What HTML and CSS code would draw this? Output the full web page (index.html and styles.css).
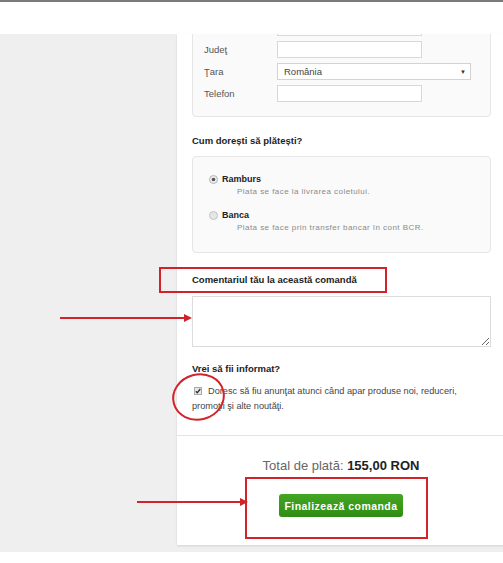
FILE: index.html
```html
<!DOCTYPE html>
<html lang="ro">
<head>
    <meta charset="UTF-8">
    <meta name="viewport" content="width=device-width, initial-scale=1.0">
    <title>Finalizare comandă</title>
    <link rel="stylesheet" href="styles.css">
</head>
<body>

    <div class="topbar"></div>

    <div class="stage">
        <div class="card">
            <div class="card-body">

                <div class="address">
                    <label></label>
                    <input type="text" class="field">
                    <label>Judeţ</label>
                    <input type="text" class="field">
                    <label>Ţara</label>
                    <div class="select">
                        <span>România</span>
                        <span class="caret">&#9660;</span>
                    </div>
                    <label>Telefon</label>
                    <input type="text" class="field">
                </div>

                <h4 class="section-title first">Cum dorești să plătești?</h4>
                <div class="payment">
                    <div class="option">
                        <div class="option-head">
                            <svg class="radio" width="9" height="9" viewBox="0 0 9 9">
                                <circle cx="4.5" cy="4.5" r="4" fill="#eeeeee" stroke="#b5b5b5" stroke-width="1"/>
                                <circle cx="4.5" cy="4.5" r="1.8" fill="#555"/>
                            </svg>
                            <span class="option-name">Ramburs</span>
                        </div>
                        <div class="option-desc">Plata se face la livrarea coletului.</div>
                    </div>
                    <div class="option">
                        <div class="option-head">
                            <svg class="radio" width="9" height="9" viewBox="0 0 9 9">
                                <circle cx="4.5" cy="4.5" r="4" fill="#e6e6e6" stroke="#c2c2c2" stroke-width="1"/>
                            </svg>
                            <span class="option-name">Banca</span>
                        </div>
                        <div class="option-desc">Plata se face prin transfer bancar în cont BCR.</div>
                    </div>
                </div>

                <h4 class="section-title comment-title">Comentariul tău la această comandă</h4>
                <textarea class="comment"></textarea>

                <h4 class="section-title notify-title">Vrei să fii informat?</h4>
                <p class="notify">
                    <svg class="check" width="8" height="8" viewBox="0 0 8 8">
                        <rect x="0.5" y="0.5" width="7" height="7" fill="#e8e8e8" stroke="#a9a9a9"/>
                        <path d="M1.8 4.2 L3.3 5.7 L6.3 2" fill="none" stroke="#333" stroke-width="1.3"/>
                    </svg>Doresc să fiu anunţat atunci când apar produse noi, reduceri, promoţii şi alte noutăţi.
                </p>
            </div>

            <div class="card-footer">
                <div class="total">Total de plată: <strong>155,00 RON</strong></div>
                <button class="submit">Finalizează comanda</button>
            </div>
        </div>
    </div>

    <!-- annotations drawn over the screenshot -->
    <svg class="marks" width="503" height="563" viewBox="0 0 503 563">
        <rect x="160" y="268" width="226" height="24" fill="none" stroke="#d2232a" stroke-width="2"/>
        <rect x="246" y="478" width="181" height="60" fill="none" stroke="#d2232a" stroke-width="2"/>
        <ellipse cx="198.5" cy="397" rx="25.5" ry="22.5" fill="none" stroke="#d2232a" stroke-width="2" transform="rotate(-15 198.5 397)"/>
        <line x1="60" y1="318" x2="185" y2="318" stroke="#d2232a" stroke-width="2"/>
        <polygon points="184,314 192,318 184,322" fill="#d2232a"/>
        <line x1="137" y1="502" x2="241" y2="502" stroke="#d2232a" stroke-width="2"/>
        <polygon points="240,498 248,502 240,506" fill="#d2232a"/>
    </svg>

</body>
</html>
```

FILE: styles.css
```css
body {
    margin: 0;
    height: 563px;
    overflow: hidden;
    position: relative;
    background: #fff;
    font-family: "Liberation Sans", Arial, sans-serif;
    color: #444;
}
.topbar {
    height: 32px;
    border-top: 2px solid #7a7a7a;
    background: #fff;
}
.stage {
    height: 518px;
    padding-left: 177px;
    box-sizing: border-box;
    background: #efefef;
}
.card {
    width: 328px;
    height: 511px;
    background: #fff;
    overflow: hidden;
    box-shadow: 0 1px 2px rgba(0, 0, 0, 0.12);
}
.card-body {
    padding: 0 14px 21px 15px;
}

/* address block, scrolled half out of view */
.address {
    margin-top: -23px;
    border: 1px solid #e6e6e6;
    border-radius: 4px;
    background: #fafafa;
    padding: 7px 11px 14px;
    display: grid;
    grid-template-columns: 73px auto;
    row-gap: 5px;
    align-items: center;
}
.address label {
    font-size: 9.5px;
    color: #555;
}
.field {
    width: 145px;
    height: 17px;
    box-sizing: border-box;
    border: 1px solid #d8d8d8;
    background: #fff;
    margin: 0;
    padding: 0;
}
.select {
    width: 194px;
    height: 17px;
    box-sizing: border-box;
    border: 1px solid #d3d3d3;
    background: #fff;
    display: flex;
    justify-content: space-between;
    align-items: center;
    padding: 0 4px 0 6px;
    font-size: 9.5px;
    color: #444;
}
.caret {
    font-size: 6px;
    color: #333;
}

.section-title {
    font-size: 9.5px;
    font-weight: bold;
    color: #222;
    line-height: 12px;
    margin: 0;
}
.section-title.first {
    margin-top: 18px;
}
.comment-title {
    margin-top: 21px;
}
.notify-title {
    margin-top: 16px;
}

.payment {
    margin-top: 9px;
    border: 1px solid #e6e6e6;
    border-radius: 4px;
    background: #fafafa;
    padding: 16px 16px 18px;
    display: flex;
    flex-direction: column;
    gap: 11px;
}
.option-head {
    display: flex;
    align-items: center;
    height: 12px;
}
.radio {
    margin-right: 4px;
}
.option-name {
    font-size: 9px;
    font-weight: bold;
    color: #222;
}
.option-desc {
    padding-left: 28px;
    font-size: 8px;
    line-height: 13px;
    color: #8a8a8a;
    letter-spacing: 0.45px;
}

.comment {
    display: block;
    margin-top: 10px;
    width: 299px;
    height: 51px;
    box-sizing: border-box;
    border: 1px solid #dcdcdc;
    background: #fff;
}

.notify {
    margin: 9px 0 0;
    font-size: 9.2px;
    line-height: 15px;
    color: #444;
}
.check {
    margin: 0 6px 0 2px;
    vertical-align: -1px;
}

.card-footer {
    border-top: 1px solid #e4e4e4;
    padding-top: 23px;
    text-align: center;
}
.total {
    font-size: 13px;
    line-height: 14px;
    color: #666;
}
.total strong {
    color: #222;
}
.submit {
    margin-top: 21px;
    height: 23px;
    padding: 0 5px;
    border: none;
    border-radius: 3px;
    background: linear-gradient(#45a622, #2f8c14);
    color: #fff;
    font-family: "Liberation Sans", Arial, sans-serif;
    font-size: 10.5px;
    font-weight: bold;
    letter-spacing: 0.45px;
    cursor: pointer;
}

.marks {
    position: absolute;
    top: 0;
    left: 0;
    pointer-events: none;
}
```
